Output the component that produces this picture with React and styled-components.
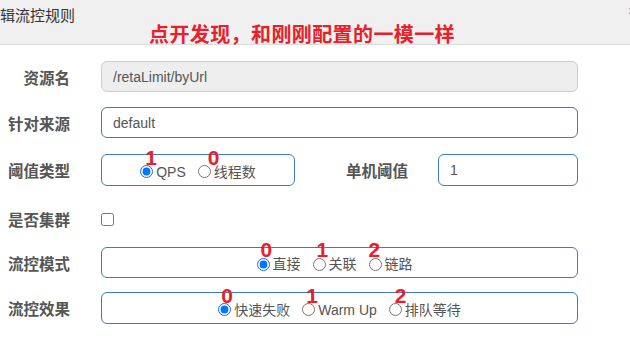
import React from 'react';
import styled, { createGlobalStyle } from 'styled-components';

const Global = createGlobalStyle`
  html, body { margin: 0; padding: 0; background: #fff; }
  body {
    width: 630px; height: 346px; overflow: hidden;
    font-family: "Liberation Sans", "Noto Sans CJK SC", sans-serif;
  }
`;

const Page = styled.div`
  width: 630px;
  height: 346px;
  overflow: hidden;
  background: #fff;
`;

const Header = styled.div`
  height: 44px;
  background: #f0f0f0;
  border-bottom: 1px solid #dcdcdc;
  display: flex;
  flex-direction: column;
`;

const TitleRow = styled.div`
  display: flex;
  justify-content: space-between;
  align-items: flex-start;
  padding-top: 6px;
  height: 18px;
`;

const Title = styled.span`
  font-family: "Noto Sans CJK SC", sans-serif;
  font-size: 15px;
  line-height: 18px;
  color: #333;
`;

const Close = styled.span`
  font-size: 14px;
  line-height: 10px;
  color: #aaa;
  margin-right: -6px;
`;

const Note = styled.div`
  padding-left: 149px;
  font-family: "Noto Sans CJK SC", sans-serif;
  font-weight: 700;
  font-size: 20px;
  letter-spacing: 0.4px;
  line-height: 20px;
  color: #e8202a;
`;

const Form = styled.div`
  padding: 16px 52px 0 0;
  display: flex;
  flex-direction: column;
`;

const Row = styled.div`
  display: flex;
  align-items: center;
  height: ${p => p.$h}px;
  margin-top: ${p => p.$mt || 0}px;
`;

const Label = styled.div`
  flex-shrink: 0;
  width: ${p => p.$w || 70}px;
  margin-right: ${p => p.$mr || 31}px;
  text-align: right;
  white-space: nowrap;
  font-family: "Noto Sans CJK SC", sans-serif;
  font-weight: 700;
  font-size: 15.5px;
  color: #555;
`;

const Input = styled.input`
  flex: 1;
  min-width: 0;
  height: 100%;
  box-sizing: border-box;
  border: 1px solid ${p => (p.disabled ? '#ccc' : '#3b7cc0')};
  background: ${p => (p.disabled ? '#eee' : '#fff')};
  border-radius: 6px;
  padding: 0 12px 0 11px;
  font-family: "Liberation Sans", sans-serif;
  font-size: 14px;
  color: #555;
  outline: none;
  &:disabled { color: #555; -webkit-text-fill-color: #555; }
`;

const RadioBox = styled.div`
  ${p => (p.$w ? `width: ${p.$w}px; flex-shrink: 0;` : 'flex: 1;')}
  height: 100%;
  box-sizing: border-box;
  border: 1px solid #3b7cc0;
  border-radius: 6px;
  padding-top: 3px;
  padding-right: ${p => p.$pr || 0}px;
  display: flex;
  justify-content: center;
  align-items: center;
  gap: 12px;
`;

const Option = styled.label`
  position: relative;
  display: inline-flex;
  align-items: center;
  line-height: 20px;
  font-family: "Liberation Sans", "Noto Sans CJK SC", sans-serif;
  font-size: 14px;
  color: #555;
  white-space: nowrap;
`;

const Radio = styled.input.attrs({ type: 'radio' })`
  width: 13px;
  height: 13px;
  margin: 0 3px 0 0;
`;

const Check = styled.input.attrs({ type: 'checkbox' })`
  width: 13px;
  height: 13px;
  margin: 0;
`;

const Mark = styled.span`
  position: absolute;
  left: ${p => p.$dx}px;
  top: ${p => p.$dy ?? -14}px;
  font-family: "Liberation Sans", sans-serif;
  font-weight: 700;
  font-size: 21px;
  line-height: 20px;
  color: #e8202a;
  pointer-events: none;
`;

function Opt({ name, label, checked, mark, dx, dy }) {
  return (
    <Option>
      <Radio name={name} defaultChecked={checked} />
      {label}
      <Mark $dx={dx} $dy={dy}>{mark}</Mark>
    </Option>
  );
}

export default function App() {
  return (
    <Page>
      <Global />
      <Header>
        <TitleRow>
          <Title>辑流控规则</Title>
          <Close>×</Close>
        </TitleRow>
        <Note>点开发现，和刚刚配置的一模一样</Note>
      </Header>
      <Form>
        <Row $h={31}>
          <Label>资源名</Label>
          <Input disabled defaultValue="/retaLimit/byUrl" />
        </Row>
        <Row $h={31} $mt={15}>
          <Label>针对来源</Label>
          <Input defaultValue="default" />
        </Row>
        <Row $h={32} $mt={16}>
          <Label>阈值类型</Label>
          <RadioBox $w={194}>
            <Opt name="grade" label="QPS" checked mark="1" dx={5} />
            <Opt name="grade" label="线程数" mark="0" dx={10} />
          </RadioBox>
          <Label $w={113} $mr={30}>单机阈值</Label>
          <Input defaultValue="1" />
        </Row>
        <Row $h={32} $mt={17}>
          <Label>是否集群</Label>
          <Check />
        </Row>
        <Row $h={31} $mt={12}>
          <Label>流控模式</Label>
          <RadioBox $pr={10}>
            <Opt name="strategy" label="直接" checked mark="0" dx={4} />
            <Opt name="strategy" label="关联" mark="1" dx={4} />
            <Opt name="strategy" label="链路" mark="2" dx={0} />
          </RadioBox>
        </Row>
        <Row $h={32} $mt={14}>
          <Label>流控效果</Label>
          <RadioBox>
            <Opt name="behavior" label="快速失败" checked mark="0" dx={3} />
            <Opt name="behavior" label="Warm Up" mark="1" dx={4} />
            <Opt name="behavior" label="排队等待" mark="2" dx={6} />
          </RadioBox>
        </Row>
      </Form>
    </Page>
  );
}
